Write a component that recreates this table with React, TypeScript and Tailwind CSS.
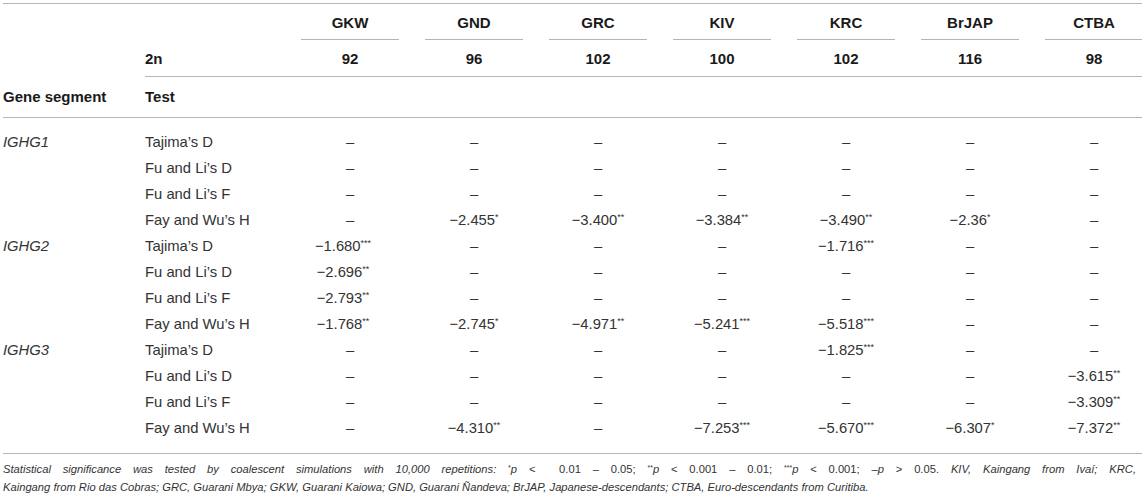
import React from "react";

const cols = ["GKW", "GND", "GRC", "KIV", "KRC", "BrJAP", "CTBA"];
const ns = ["92", "96", "102", "100", "102", "116", "98"];

const D = "–";
const groups: { gene: string; rows: { test: string; vals: string[] }[] }[] = [
  {
    gene: "IGHG1",
    rows: [
      { test: "Tajima’s D", vals: [D, D, D, D, D, D, D] },
      { test: "Fu and Li’s D", vals: [D, D, D, D, D, D, D] },
      { test: "Fu and Li’s F", vals: [D, D, D, D, D, D, D] },
      { test: "Fay and Wu’s H", vals: [D, "−2.455|*", "−3.400|**", "−3.384|**", "−3.490|**", "−2.36|*", D] },
    ],
  },
  {
    gene: "IGHG2",
    rows: [
      { test: "Tajima’s D", vals: ["−1.680|***", D, D, D, "−1.716|***", D, D] },
      { test: "Fu and Li’s D", vals: ["−2.696|**", D, D, D, D, D, D] },
      { test: "Fu and Li’s F", vals: ["−2.793|**", D, D, D, D, D, D] },
      { test: "Fay and Wu’s H", vals: ["−1.768|**", "−2.745|*", "−4.971|**", "−5.241|***", "−5.518|***", D, D] },
    ],
  },
  {
    gene: "IGHG3",
    rows: [
      { test: "Tajima’s D", vals: [D, D, D, D, "−1.825|***", D, D] },
      { test: "Fu and Li’s D", vals: [D, D, D, D, D, D, "−3.615|**"] },
      { test: "Fu and Li’s F", vals: [D, D, D, D, D, D, "−3.309|**"] },
      { test: "Fay and Wu’s H", vals: [D, "−4.310|**", D, "−7.253|***", "−5.670|***", "−6.307|*", "−7.372|**"] },
    ],
  },
];

function Val({ v, first }: { v: string; first: boolean }) {
  const [n, s] = v.split("|");
  return (
    <div className={`flex h-[26px] items-center justify-center ${first && s ? "pr-[14px]" : ""}`}>
      <span>
        {n}
        {s ? <sup className="text-[9px]">{s}</sup> : null}
      </span>
    </div>
  );
}

export default function App() {
  const grid = "grid grid-cols-[142px_143px_repeat(7,124px)]";
  return (
    <div
      className="w-[1142px] h-[502px] overflow-hidden bg-white text-[#333] pt-[3px] pl-[3px]"
      style={{ fontFamily: '"Liberation Sans", Arial, sans-serif' }}
    >
      <div className="w-[1156px]">
        <div className="border-t border-[#b5b5b5]">
          <div className={`${grid} font-bold text-[#1a1a1a] text-[15px]`}>
            <div />
            <div />
            {cols.map((c) => (
              <div key={c} className="px-[13px]">
                <div className="h-[36px] pt-[4px] flex items-center justify-center border-b border-[#b5b5b5]">{c}</div>
              </div>
            ))}
          </div>
          <div className={`${grid} font-bold text-[#1a1a1a] text-[15px]`}>
            <div />
            <div className="col-span-8 border-b border-[#b5b5b5] grid grid-cols-[143px_repeat(7,124px)]">
              <div className="h-[36px] pt-[3px] flex items-center">2n</div>
              {ns.map((n, i) => (
                <div key={i} className="h-[36px] pt-[3px] flex items-center justify-center">
                  {n}
                </div>
              ))}
            </div>
          </div>
          <div className={`${grid} font-bold text-[#1a1a1a] text-[15px] border-b border-[#b5b5b5]`}>
            <div className="h-[40px] flex items-center">Gene segment</div>
            <div className="h-[40px] flex items-center">Test</div>
          </div>
          <div className="pt-[11px] pb-[12px] border-b border-[#b5b5b5] text-[14.8px]">
            {groups.map((g) =>
              g.rows.map((r, ri) => (
                <div key={g.gene + ri} className={grid}>
                  <div className="h-[26px] flex items-center italic">{ri === 0 ? g.gene : ""}</div>
                  <div className="h-[26px] flex items-center">{r.test}</div>
                  {r.vals.map((v, ci) => (
                    <Val key={ci} v={v} first={ci === 0} />
                  ))}
                </div>
              ))
            )}
          </div>
        </div>
        <div className="w-[1133px] pt-[6px] text-[11.2px] leading-[18px] text-[#333]">
          <div className="text-justify [text-align-last:justify]">
            <span className="italic">
              Statistical significance was tested by coalescent simulations with 10,000 repetitions:{" "}
            </span>
            <sup className="text-[7px]">*</sup>
            <span className="italic">p</span> &lt;&nbsp; 0.01 – 0.05; <sup className="text-[7px]">**</sup>
            <span className="italic">p</span> &lt; 0.001 – 0.01; <sup className="text-[7px]">***</sup>
            <span className="italic">p</span> &lt; 0.001; –<span className="italic">p</span> &gt; 0.05.{" "}
            <span className="italic">KIV, Kaingang from Ivaí; KRC,</span>
          </div>
          <div className="italic">
            Kaingang from Rio das Cobras; GRC, Guarani Mbya; GKW, Guarani Kaiowa; GND, Guarani Ñandeva; BrJAP,
            Japanese-descendants; CTBA, Euro-descendants from Curitiba.
          </div>
        </div>
      </div>
    </div>
  );
}
